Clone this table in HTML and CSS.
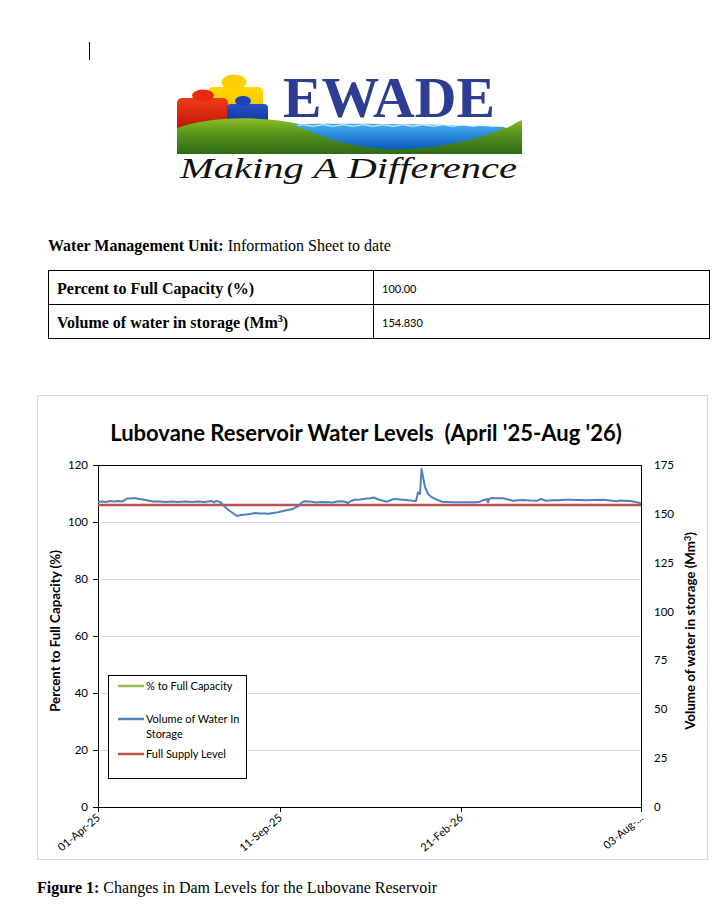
FILE: index.html
```html
<!DOCTYPE html>
<html lang="en">
<head>
<meta charset="utf-8">
<title>Water Management Unit – Information Sheet</title>
<link rel="stylesheet" href="styles.css">
</head>
<body>
<div class="page">
  <div class="cursor"></div>

  <svg class="logo" viewBox="170 60 360 130" width="360" height="130" aria-label="EWADE logo">
    <defs>
      <linearGradient id="gRed" x1="0" y1="0" x2="0" y2="1">
        <stop offset="0" stop-color="#f23c14"/><stop offset="1" stop-color="#b0100c"/>
      </linearGradient>
      <linearGradient id="gYel" x1="0" y1="0" x2="0" y2="1">
        <stop offset="0" stop-color="#ffd900"/><stop offset="1" stop-color="#eeb300"/>
      </linearGradient>
      <linearGradient id="gBlue" x1="0" y1="0" x2="0" y2="1">
        <stop offset="0" stop-color="#2452cc"/><stop offset="1" stop-color="#0e2e8a"/>
      </linearGradient>
      <linearGradient id="gGreen" x1="0" y1="0" x2="0" y2="1">
        <stop offset="0" stop-color="#8cc023"/><stop offset="0.45" stop-color="#55931d"/><stop offset="1" stop-color="#2f6a14"/>
      </linearGradient>
      <linearGradient id="gWater" x1="0" y1="0" x2="0" y2="1">
        <stop offset="0" stop-color="#45b0f0"/><stop offset="1" stop-color="#0b5cbc"/>
      </linearGradient>
    </defs>
    <rect x="208" y="87" width="55" height="40" rx="5" fill="url(#gYel)"/>
    <ellipse cx="234" cy="82" rx="12.5" ry="7.5" fill="#fcd000"/>
    <rect x="177" y="98" width="51" height="36" rx="5" fill="url(#gRed)"/>
    <ellipse cx="203" cy="95.5" rx="11" ry="6" fill="#e82a10"/>
    <rect x="227" y="104" width="41" height="24" rx="4" fill="url(#gBlue)"/>
    <ellipse cx="243" cy="101" rx="8" ry="5" fill="#1c45b8"/>
    <path d="M177,128 C205,118 250,114 300,124 L506,128 C512,126 516,122 522,120 L522,154 L177,154 Z" fill="url(#gGreen)"/>
    <path d="M292,124 C360,123 440,124 506,127 C480,140 430,151 385,149 C345,147 315,134 292,124 Z" fill="url(#gWater)"/>
    <path d="M298,125.5 q5,-1.5 10,0 t10,0 t10,0 t10,0 t10,0 t10,0 t10,0 t10,0 t10,0 t10,0 t10,0 t10,0 t10,0 t10,0 t10,0 t10,0 t10,0 t10,0 t10,0 t10,0" fill="none" stroke="#e8f6ff" stroke-width="1.2"/>
    <text x="283" y="117" class="ewade" textLength="212" lengthAdjust="spacingAndGlyphs">EWADE</text>
    <text x="180" y="178" class="tagline" textLength="337" lengthAdjust="spacingAndGlyphs">Making A Difference</text>
  </svg>

  <p class="intro"><b>Water Management Unit:</b> Information Sheet to date</p>

  <table class="info">
    <tr>
      <td class="label">Percent to Full Capacity (%)</td>
      <td class="value">100.00</td>
    </tr>
    <tr>
      <td class="label">Volume of water in storage (Mm<sup>3</sup>)</td>
      <td class="value">154.830</td>
    </tr>
  </table>

  <div class="chart">
    <h2 class="chart-title">Lubovane Reservoir Water Levels&nbsp; (April '25-Aug '26)</h2>
    <svg class="plot" viewBox="38 446 669 414" width="669" height="414">
      <g class="grid">
        <line x1="98" y1="523.5" x2="641" y2="523.5"/>
        <line x1="98" y1="580.5" x2="641" y2="580.5"/>
        <line x1="98" y1="637.5" x2="641" y2="637.5"/>
        <line x1="98" y1="694.5" x2="641" y2="694.5"/>
        <line x1="98" y1="751.5" x2="641" y2="751.5"/>
      </g>
      <g class="axis">
        <rect x="98.5" y="466.5" width="543" height="342" fill="none"/>
        <line x1="93" y1="466.5" x2="98" y2="466.5"/>
        <line x1="93" y1="523.5" x2="98" y2="523.5"/>
        <line x1="93" y1="580.5" x2="98" y2="580.5"/>
        <line x1="93" y1="637.5" x2="98" y2="637.5"/>
        <line x1="93" y1="694.5" x2="98" y2="694.5"/>
        <line x1="93" y1="751.5" x2="98" y2="751.5"/>
        <line x1="93" y1="808.5" x2="98" y2="808.5"/>
        <line x1="98.5" y1="808" x2="98.5" y2="813"/>
        <line x1="280.5" y1="808" x2="280.5" y2="813"/>
        <line x1="461.5" y1="808" x2="461.5" y2="813"/>
        <line x1="641.5" y1="808" x2="641.5" y2="813"/>
      </g>
      <g class="tick left">
        <text x="88" y="470">120</text>
        <text x="88" y="527">100</text>
        <text x="88" y="584">80</text>
        <text x="88" y="641">60</text>
        <text x="88" y="698">40</text>
        <text x="88" y="755">20</text>
        <text x="88" y="812">0</text>
      </g>
      <g class="tick right">
        <text x="654" y="470">175</text>
        <text x="654" y="519">150</text>
        <text x="654" y="568">125</text>
        <text x="654" y="617">100</text>
        <text x="654" y="665">75</text>
        <text x="654" y="714">50</text>
        <text x="654" y="763">25</text>
        <text x="654" y="812">0</text>
      </g>
      <g class="tick xlab">
        <text x="101" y="820" transform="rotate(-40 101 820)">01-Apr-25</text>
        <text x="283" y="820" transform="rotate(-40 283 820)">11-Sep-25</text>
        <text x="464" y="820" transform="rotate(-40 464 820)">21-Feb-26</text>
        <text x="644" y="820" transform="rotate(-40 644 820)">03-Aug-...</text>
      </g>
      <text class="axis-title" x="60" y="632" transform="rotate(-90 60 632)">Percent to Full Capacity (%)</text>
      <text class="axis-title" x="695" y="632" transform="rotate(-90 695 632)">Volume of water in storage (Mm<tspan class="sup" dy="-4">3</tspan><tspan dy="4">)</tspan></text>

      <line class="fsl" x1="98" y1="506" x2="641" y2="506"/>
      <polyline class="vol" points="98,503 102,502.5 106,503 110,502 114,502.5 118,502 122,502.5 125,501 127,499.5 131,499.5 135,499 139,500 143,500.5 148,501.5 153,502.5 160,502.5 166,503 172,502.5 178,503 185,502.5 192,503 198,502.5 204,503 208,502.5 212,502 214,503.5 216,502 220,503 222,505 226,509 230,512 234,515 237,517 241,516 246,515.5 250,515 255,514 260,514.5 265,514.5 269,514.8 273,514 278,513.3 283,512 288,511 293,510 296,508 299,507 301,504 304,502.3 310,502.5 316,503.5 322,503 328,503.3 333,503.5 337,502.5 342,502.3 346,503 348,504 351,502 355,500.7 360,500.5 365,499.8 370,499.3 374,498.5 377,500 382,501.5 387,502.7 391,501 394,500 400,500.5 406,501 413,501.7 416,502 418,493.3 420,495 421.5,470 423,478 425,488 428,495 432,498.5 437,500.7 442,502.7 447,503 452,503.3 460,503.3 470,503.3 476,503.2 480,502.7 484,501 487,500 488,503.5 489,500 492,499 498,499.3 503,499.3 508,500.5 513,501.7 518,501.3 523,501 530,501.5 537,501.7 541,500 546,501.7 552,501.3 558,501.3 565,500.8 570,500.7 578,501 586,501.3 594,501 603,500.7 610,501.5 617,502.3 620,501.5 624,501.7 630,502 634,502.7 638,503.5 641,504.3"/>

      <g class="legend">
        <rect x="108.5" y="676.5" width="138" height="103"/>
        <line class="lg-green" x1="118" y1="687" x2="144" y2="687"/>
        <text x="146" y="691">% to Full Capacity</text>
        <line class="lg-blue" x1="118" y1="720" x2="144" y2="720"/>
        <text x="146" y="724">Volume of Water In</text>
        <text x="146" y="739">Storage</text>
        <line class="lg-red" x1="118" y1="755" x2="144" y2="755"/>
        <text x="146" y="759">Full Supply Level</text>
      </g>
    </svg>
  </div>

  <p class="caption"><b>Figure 1:</b> Changes in Dam Levels for the Lubovane Reservoir</p>
</div>
</body>
</html>
```

FILE: styles.css
```css
html, body {
  margin: 0;
  padding: 0;
  background: #ffffff;
}

body {
  font-family: "Liberation Serif", "Times New Roman", serif;
  color: #000000;
}

.page {
  width: 728px;
  overflow: hidden;
}

.cursor {
  width: 1px;
  height: 18px;
  background: #000000;
  margin: 42px 0 0 89px;
}

.logo {
  display: block;
  margin-left: 170px;
}

.ewade {
  font-family: "Liberation Serif", "Times New Roman", serif;
  font-weight: bold;
  font-size: 57px;
  fill: #2c3d93;
}

.tagline {
  font-family: "Liberation Serif", "Times New Roman", serif;
  font-style: italic;
  font-size: 30px;
  fill: #111111;
}

.intro {
  margin: 47px 0 0 48px;
  font-size: 16px;
  line-height: 18px;
}

.info {
  margin: 15px 0 0 48px;
  width: 662px;
  border-collapse: collapse;
}

.info td {
  border: 1px solid #000000;
  height: 34px;
  padding: 2px 8px 0;
  box-sizing: border-box;
  vertical-align: middle;
}

.info .label {
  width: 325px;
  font-weight: bold;
  font-size: 16px;
}

.info .label sup {
  font-size: 10px;
  line-height: 0;
}

.info .value {
  font-family: Lato, "Liberation Sans", sans-serif;
  font-size: 11px;
}

.chart {
  margin: 56px 0 0 37px;
  width: 671px;
  height: 465px;
  border: 1px solid #d9d9d9;
  box-sizing: border-box;
}

.chart-title {
  margin: 25px 0 0 0;
  padding-right: 13px;
  text-align: center;
  font-family: Lato, "Liberation Sans", sans-serif;
  font-weight: bold;
  font-size: 22px;
  line-height: 24px;
  color: #000000;
}

.plot {
  display: block;
}

.grid line {
  stroke: #d9d9d9;
  stroke-width: 1;
}

.axis rect,
.axis line {
  stroke: #000000;
  stroke-width: 1;
}

.tick text {
  font-family: Lato, "Liberation Sans", sans-serif;
  font-size: 11.5px;
  fill: #000000;
}

.tick.left text {
  text-anchor: end;
}

.tick.xlab text {
  text-anchor: end;
  font-size: 11px;
}

.axis-title {
  font-family: Lato, "Liberation Sans", sans-serif;
  font-weight: bold;
  font-size: 13.3px;
  text-anchor: middle;
  fill: #000000;
}

.axis-title .sup {
  font-size: 9px;
}

.fsl {
  stroke: #c0504d;
  stroke-width: 2.5;
}

.vol {
  fill: none;
  stroke: #4f81bd;
  stroke-width: 2;
  stroke-linejoin: round;
}

.legend rect {
  fill: #ffffff;
  stroke: #000000;
  stroke-width: 1;
}

.legend text {
  font-family: Lato, "Liberation Sans", sans-serif;
  font-size: 11px;
  fill: #000000;
}

.legend line {
  stroke-width: 2.5;
}

.lg-green { stroke: #9bbb59; }
.lg-blue { stroke: #4f81bd; }
.lg-red { stroke: #c0504d; }

.caption {
  margin: 19px 0 0 37px;
  font-size: 16px;
  line-height: 18px;
}
```
